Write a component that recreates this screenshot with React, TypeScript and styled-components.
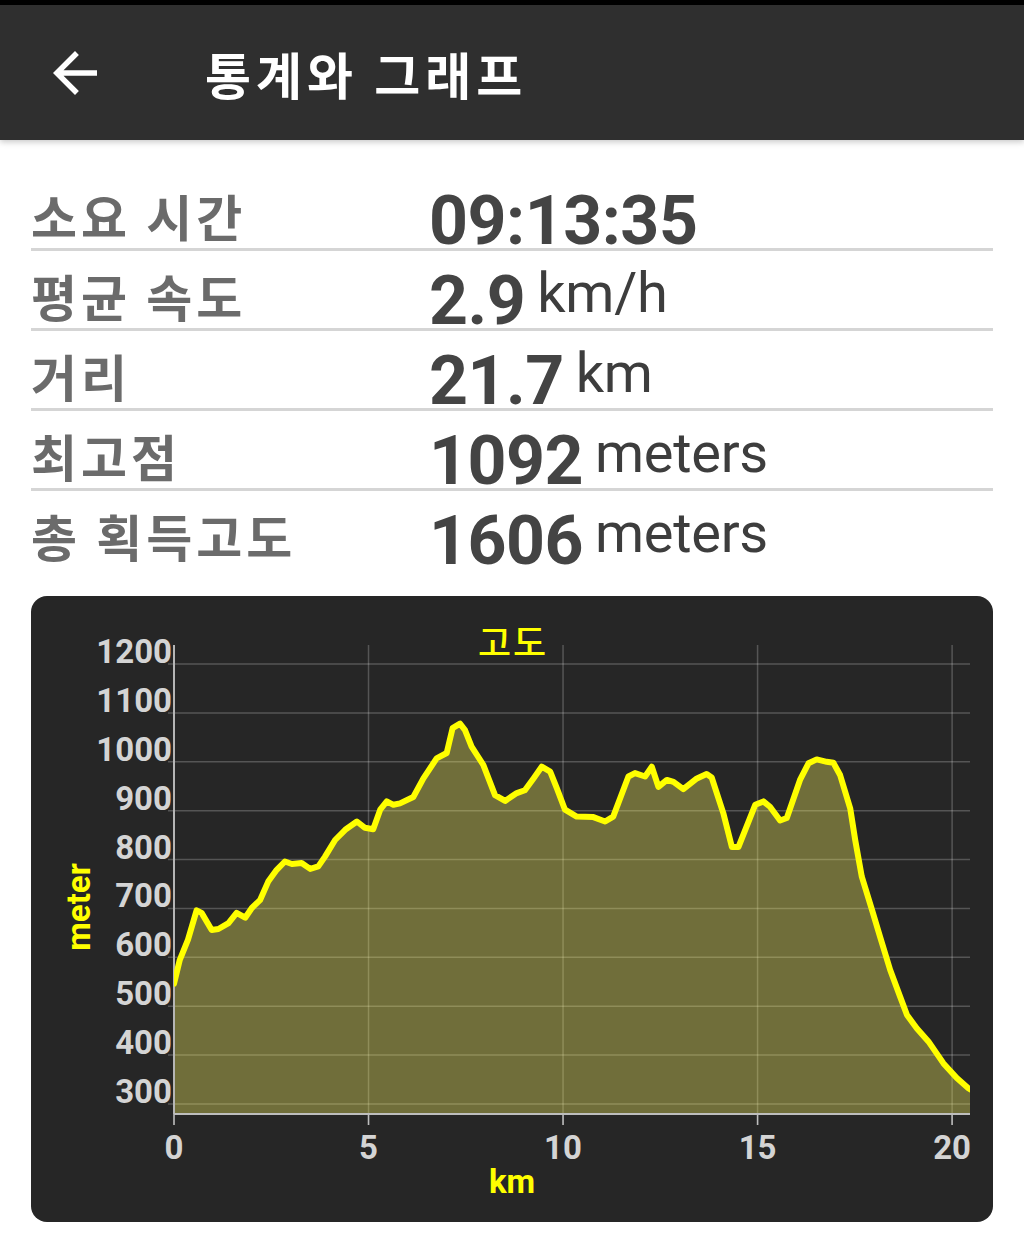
import * as React from "react"
import styled, { createGlobalStyle } from "styled-components"

const GlobalStyle = createGlobalStyle`
  html, body {
    margin: 0;
    padding: 0;
    background: #ffffff;
  }
  body {
    font-family: Roboto, "Noto Sans CJK KR", sans-serif;
  }
`

const Page = styled.div`
  width: 1024px;
  min-height: 1259px;
  background: #ffffff;
`

const TopBar = styled.header`
  box-sizing: border-box;
  height: 140px;
  border-top: 5px solid #000000;
  background: #2f2f2f;
  display: flex;
  align-items: center;
  padding-left: 42px;
  box-shadow: 0 2px 6px rgba(0, 0, 0, 0.22);
  position: relative;
  z-index: 1;
`

const BackButton = styled.button`
  width: 66px;
  height: 66px;
  padding: 0;
  border: none;
  background: none;
  display: flex;
  color: #ffffff;
`

const Title = styled.h1`
  margin: 0 0 0 97px;
  font-family: "Noto Sans CJK KR", sans-serif;
  font-size: 50px;
  font-weight: 700;
  letter-spacing: 5px;
  line-height: 1;
  color: #ffffff;
`

const Stats = styled.section`
  padding: 31px 31px 0;
`

interface RowProps {
  last?: boolean
}
const Row = styled.div<RowProps>`
  box-sizing: border-box;
  height: 80px;
  display: flex;
  align-items: flex-end;
  border-bottom: 3px solid ${(p) => (p.last ? "transparent" : "#d5d5d5")};
`

const Label = styled.div`
  width: 398px;
  flex-shrink: 0;
  margin-bottom: 8px;
  font-family: "Noto Sans CJK KR", sans-serif;
  font-size: 50px;
  font-weight: 700;
  letter-spacing: 4px;
  line-height: 50px;
  color: #6b6b6b;
  white-space: nowrap;
`

const Value = styled.div`
  margin-bottom: -1px;
  font-family: Roboto, sans-serif;
  font-size: 68px;
  font-weight: 700;
  letter-spacing: -0.5px;
  line-height: 56px;
  color: #444444;
  white-space: nowrap;
`

const Unit = styled.span`
  margin-left: 12px;
  font-size: 56px;
  font-weight: 400;
  letter-spacing: -0.3px;
  vertical-align: 12px;
  color: #3d3d3d;
`

const Card = styled.div`
  margin: 25px 31px 0;
  height: 626px;
  border-radius: 16px;
  background: #262626;
  overflow: hidden;

  svg {
    display: block;
  }
`

const TickLabel = styled.text`
  font-family: Roboto, sans-serif;
  font-size: 33px;
  font-weight: 700;
  fill: #d4d4d4;
`

const AxisTitle = styled.text`
  font-family: Roboto, "Noto Sans CJK KR", sans-serif;
  font-size: 33px;
  font-weight: 700;
  fill: #ffff00;
`

const ChartTitle = styled.text`
  font-family: "Noto Sans CJK KR", sans-serif;
  font-size: 36px;
  font-weight: 500;
  letter-spacing: 2px;
  fill: #ffff00;
`

// distance (km), elevation (m)
const PROFILE: [number, number][] = [
  [0, 546], [0.15, 595], [0.36, 636], [0.58, 696], [0.71, 691], [0.97, 656],
  [1.14, 658], [1.4, 670], [1.61, 691], [1.83, 681], [2.0, 701], [2.21, 717],
  [2.42, 755], [2.64, 779], [2.85, 796], [3.03, 791], [3.28, 793], [3.5, 781],
  [3.71, 786], [3.88, 806], [4.14, 840], [4.4, 861], [4.7, 878], [4.91, 865],
  [5.12, 862], [5.3, 902], [5.47, 919], [5.64, 912], [5.81, 915], [6.15, 928],
  [6.41, 966], [6.75, 1007], [7.01, 1018], [7.16, 1069], [7.35, 1078], [7.48, 1065],
  [7.65, 1031], [7.95, 994], [8.25, 932], [8.51, 920], [8.81, 936], [9.02, 942],
  [9.24, 966], [9.45, 990], [9.67, 980], [9.84, 946], [10.05, 902], [10.35, 888],
  [10.78, 887], [11.08, 878], [11.29, 888], [11.68, 970], [11.85, 977], [12.11, 970],
  [12.28, 990], [12.45, 949], [12.67, 963], [12.84, 959], [13.09, 944], [13.44, 966],
  [13.69, 975], [13.82, 968], [14.12, 895], [14.34, 826], [14.51, 826], [14.94, 912],
  [15.15, 919], [15.32, 908], [15.58, 880], [15.75, 885], [16.09, 963], [16.31, 997],
  [16.52, 1005], [16.78, 1000], [16.95, 998], [17.12, 973], [17.38, 905], [17.51, 840],
  [17.68, 765], [17.94, 697], [18.15, 642], [18.41, 574], [18.66, 520], [18.84, 482],
  [19.09, 455], [19.39, 428], [19.78, 383], [20.12, 353], [20.42, 332], [20.46, 330],
]

const W = 962
const H = 626
const PLOT = { left: 143, right: 939, top: 49, bottom: 518 }
const X_MAX = 20.46
const Y_MIN = 279.5
const Y_MAX = 1239

const sx = (km: number) => PLOT.left + (km / X_MAX) * (PLOT.right - PLOT.left)
const sy = (m: number) =>
  PLOT.bottom - ((m - Y_MIN) / (Y_MAX - Y_MIN)) * (PLOT.bottom - PLOT.top)

const Y_TICKS = [300, 400, 500, 600, 700, 800, 900, 1000, 1100, 1200]
const X_TICKS = [0, 5, 10, 15, 20]

const ElevationChart = () => {
  const line = PROFILE.map(([k, m], i) => `${i ? "L" : "M"}${sx(k).toFixed(1)} ${sy(m).toFixed(1)}`).join(" ")
  const area = `${line} L${sx(X_MAX)} ${PLOT.bottom} L${PLOT.left} ${PLOT.bottom} Z`

  return (
    <svg width={W} height={H} viewBox={`0 0 ${W} ${H}`}>
      <defs>
        <clipPath id="plot-clip">
          <rect x={PLOT.left} y={0} width={PLOT.right - PLOT.left} height={PLOT.bottom} />
        </clipPath>
      </defs>

      {Y_TICKS.map((v) => (
        <g key={v}>
          <line x1={PLOT.left - 6} x2={PLOT.right} y1={sy(v)} y2={sy(v)} stroke="rgba(255,255,255,0.22)" strokeWidth={1.5} />
          <TickLabel x={PLOT.left - 2} y={sy(v) - 1} textAnchor="end">{v}</TickLabel>
        </g>
      ))}
      {X_TICKS.map((v) => (
        <g key={v}>
          <line x1={sx(v)} x2={sx(v)} y1={PLOT.top} y2={PLOT.bottom + 11} stroke="rgba(255,255,255,0.22)" strokeWidth={1.5} />
          <line x1={sx(v)} x2={sx(v)} y1={PLOT.bottom} y2={PLOT.bottom + 11} stroke="#bdbdbd" strokeWidth={1.5} />
          <TickLabel x={sx(v)} y={563} textAnchor="middle">{v}</TickLabel>
        </g>
      ))}

      <path d={area} fill="rgba(255, 248, 96, 0.34)" />
      <line x1={PLOT.left} x2={PLOT.left} y1={PLOT.top} y2={PLOT.bottom} stroke="#b5b5b5" strokeWidth={2} />
      <line x1={PLOT.left} x2={PLOT.right} y1={PLOT.bottom} y2={PLOT.bottom} stroke="#bdbdbd" strokeWidth={2} />
      <path d={line} clipPath="url(#plot-clip)" fill="none" stroke="#ffff00" strokeWidth={6} strokeLinejoin="round" strokeLinecap="round" />

      <ChartTitle x={482} y={60} textAnchor="middle">고도</ChartTitle>
      <AxisTitle x={481} y={597} textAnchor="middle">km</AxisTitle>
      <AxisTitle transform="translate(59 311) rotate(-90)" textAnchor="middle">meter</AxisTitle>
    </svg>
  )
}

const stats: { label: string; value: string; unit?: string }[] = [
  { label: "소요 시간", value: "09:13:35" },
  { label: "평균 속도", value: "2.9", unit: "km/h" },
  { label: "거리", value: "21.7", unit: "km" },
  { label: "최고점", value: "1092", unit: "meters" },
  { label: "총 획득고도", value: "1606", unit: "meters" },
]

const App = () => (
  <>
    <GlobalStyle />
    <Page>
      <TopBar>
        <BackButton aria-label="back">
          <svg width="66" height="66" viewBox="0 0 24 24" fill="currentColor">
            <path d="M20 11H7.83l5.59-5.59L12 4l-8 8 8 8 1.41-1.41L7.83 13H20v-2z" />
          </svg>
        </BackButton>
        <Title>통계와 그래프</Title>
      </TopBar>

      <Stats>
        {stats.map((s, i) => (
          <Row key={s.label} last={i === stats.length - 1}>
            <Label>{s.label}</Label>
            <Value>
              {s.value}
              {s.unit && <Unit>{s.unit}</Unit>}
            </Value>
          </Row>
        ))}
      </Stats>

      <Card>
        <ElevationChart />
      </Card>
    </Page>
  </>
)

export default App
